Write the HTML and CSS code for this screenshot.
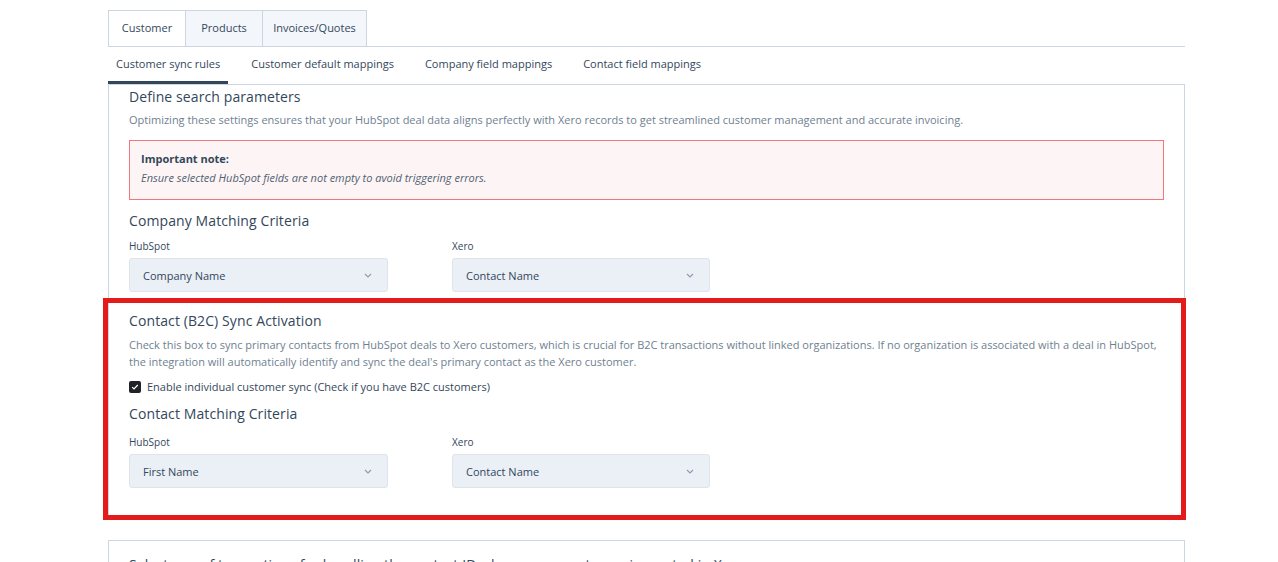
FILE: index.html
```html
<!DOCTYPE html>
<html lang="en">
<head>
<meta charset="utf-8">
<title>Customer sync rules</title>
<link rel="stylesheet" href="styles.css">
</head>
<body>
<div class="page">
  <div class="tabs">
    <div class="tab tab-active tab-w1">Customer</div>
    <div class="tab tab-w1">Products</div>
    <div class="tab tab-w2">Invoices/Quotes</div>
  </div>
  <div class="subtabs">
    <div class="subtab subtab-active">Customer sync rules</div>
    <div class="subtab">Customer default mappings</div>
    <div class="subtab">Company field mappings</div>
    <div class="subtab">Contact field mappings</div>
  </div>

  <div class="panel panel-main">
    <h2 class="title">Define search parameters</h2>
    <p class="desc">Optimizing these settings ensures that your HubSpot deal data aligns perfectly with Xero records to get streamlined customer management and accurate invoicing.</p>

    <div class="note">
      <div class="note-title">Important note:</div>
      <div class="note-text">Ensure selected HubSpot fields are not empty to avoid triggering errors.</div>
    </div>

    <h3 class="title title-sub">Company Matching Criteria</h3>
    <div class="fields">
      <div class="field">
        <div class="label">HubSpot</div>
        <div class="select"><span>Company Name</span><svg class="chev" width="8" height="5" viewBox="0 0 8 5"><path d="M1 1l3 3 3-3" fill="none" stroke="#8a9bb0" stroke-width="1.1"/></svg></div>
      </div>
      <div class="field">
        <div class="label">Xero</div>
        <div class="select"><span>Contact Name</span><svg class="chev" width="8" height="5" viewBox="0 0 8 5"><path d="M1 1l3 3 3-3" fill="none" stroke="#8a9bb0" stroke-width="1.1"/></svg></div>
      </div>
    </div>

    <div class="highlight">
      <h3 class="title title-b2c">Contact (B2C) Sync Activation</h3>
      <p class="desc desc-b2c">Check this box to sync primary contacts from HubSpot deals to Xero customers, which is crucial for B2C transactions without linked organizations. If no organization is associated with a deal in HubSpot, the integration will automatically identify and sync the deal's primary contact as the Xero customer.</p>
      <label class="check-row">
        <span class="checkbox"><svg width="12" height="12" viewBox="0 0 12 12"><path d="M3.2 6.2l1.8 1.8 3.8-4" fill="none" stroke="#fff" stroke-width="1.2"/></svg></span>
        <span>Enable individual customer sync (Check if you have B2C customers)</span>
      </label>
      <h3 class="title title-contact">Contact Matching Criteria</h3>
      <div class="fields fields-contact">
        <div class="field">
          <div class="label">HubSpot</div>
          <div class="select"><span>First Name</span><svg class="chev" width="8" height="5" viewBox="0 0 8 5"><path d="M1 1l3 3 3-3" fill="none" stroke="#8a9bb0" stroke-width="1.1"/></svg></div>
        </div>
        <div class="field">
          <div class="label">Xero</div>
          <div class="select"><span>Contact Name</span><svg class="chev" width="8" height="5" viewBox="0 0 8 5"><path d="M1 1l3 3 3-3" fill="none" stroke="#8a9bb0" stroke-width="1.1"/></svg></div>
        </div>
      </div>
      <div class="red-frame"></div>
    </div>
  </div>

  <div class="panel panel-next">
    <h3 class="title">Select one of two options for handling the contact ID when a new customer is created in Xero</h3>
  </div>
</div>
</body>
</html>
```

FILE: styles.css
```css
* { box-sizing: border-box; }
html, body { margin: 0; padding: 0; background: #fff; overflow: hidden; }
body {
  font-family: "Open Sans", "Noto Sans", "Liberation Sans", sans-serif;
  color: #33475b;
  font-size: 11px;
  height: 562px;
}
.page {
  margin-left: 108px;
  width: 1077px;
  padding-top: 10px;
}
.tabs {
  display: flex;
  height: 37px;
  border-bottom: 1px solid #cbd6e2;
}
.tab {
  display: flex;
  align-items: center;
  justify-content: center;
  height: 36px;
  padding-bottom: 2px;
  border: 1px solid #cbd6e2;
  border-bottom: none;
  background: #f3f6fa;
  margin-right: -1px;
  font-size: 11px;
  color: #33475b;
}
.tab-w1 { width: 78px; }
.tab-w2 { width: 105px; }
.tab-active { background: #fff; }
.subtabs {
  display: flex;
  gap: 15px;
  height: 37px;
}
.subtab {
  display: flex;
  align-items: center;
  padding: 0 8px 1px;
  font-size: 11px;
  white-space: nowrap;
  color: #33475b;
  border-bottom: 3px solid transparent;
}
.subtab-active {
  border-bottom-color: #33475b;
}
.panel {
  border: 1px solid #cbd6e2;
  padding: 2px 20px 0;
}
.panel-main {
  height: 433px;
}
.title {
  margin: 0;
  font-size: 14px;
  font-weight: 400;
  line-height: 20px;
  color: #33475b;
  letter-spacing: 0.1px;
}
.desc {
  margin: 4px 0 0;
  font-size: 11px;
  line-height: 17px;
  color: #6f7f91;
}
.note {
  margin-top: 12px;
  border: 1px solid #f2777c;
  background: #fdf5f5;
  padding: 8px 11px 12px;
  line-height: 19px;
  font-size: 11px;
}
.note-title { font-weight: 700; color: #33475b; }
.note-text { font-style: italic; color: #516173; }
.title-sub { margin-top: 11px; }
.fields {
  display: flex;
  gap: 64px;
  margin-top: 8px;
}
.field { width: 259px; }
.field + .field { width: 258px; }
.label {
  font-size: 10px;
  line-height: 14px;
  color: #33475b;
  margin-bottom: 5px;
}
.select {
  display: flex;
  align-items: center;
  justify-content: space-between;
  height: 34px;
  padding: 0 15px 0 13px;
  background: #eaf0f6;
  border: 1px solid #dfe3eb;
  border-radius: 3px;
  font-size: 11px;
  color: #33475b;
}
.chev { flex: none; }
.highlight {
  position: relative;
}
.title-b2c { margin-top: 19px; }
.desc-b2c { margin-top: 5px; }
.check-row {
  display: flex;
  align-items: center;
  gap: 6px;
  margin-top: 8px;
  line-height: 17px;
  font-size: 11px;
  color: #33475b;
}
.checkbox {
  display: inline-flex;
  width: 12px;
  height: 12px;
  border-radius: 2px;
  background: #1f2328;
}
.title-contact { margin-top: 9px; }
.fields-contact { margin-top: 11px; }
.red-frame {
  position: absolute;
  left: -26px;
  right: -22px;
  top: -13px;
  bottom: -32px;
  border: 5px solid #e41b1b;
  pointer-events: none;
}
.panel-next {
  margin-top: 23px;
  height: 60px;
  padding-top: 14px;
}
```
